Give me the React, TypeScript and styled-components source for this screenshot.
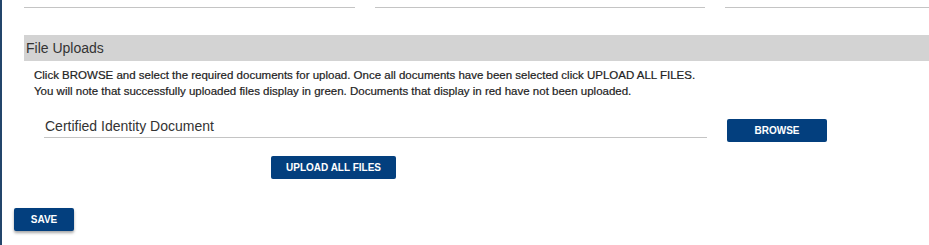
import React from "react";
import styled, { createGlobalStyle } from "styled-components";

const GlobalStyle = createGlobalStyle`
  html, body {
    margin: 0;
    padding: 0;
    background: #ffffff;
  }
  body {
    font-family: "Liberation Sans", Arial, sans-serif;
    color: #333333;
  }
`;

const Page = styled.div`
  min-height: 245px;
  border-left: 2px solid #23456b;
  box-sizing: border-box;
  overflow: hidden;
`;

const TopFields = styled.div`
  display: grid;
  grid-template-columns: 331px 330px 1fr;
  column-gap: 20px;
  margin-left: 22px;
  height: 8px;
`;

const Field = styled.div`
  border-bottom: 1px solid #c4c4c4;
  height: 7px;
`;

const SectionHeader = styled.div`
  margin: 27px 0 0 22px;
  height: 26px;
  background: #d3d3d3;
  display: flex;
  align-items: center;
  padding-left: 2px;
  font-size: 14px;
  color: #333333;
`;

const Instructions = styled.p`
  margin: 6px 0 0 32px;
  font-size: 11.5px;
  line-height: 16px;
  color: #222222;
  -webkit-text-stroke: 0.2px #222222;
`;

const UploadRow = styled.div`
  display: flex;
  align-items: flex-start;
  gap: 20px;
  margin: 18px 0 0 42px;
`;

const DocField = styled.div`
  width: 662px;
  height: 20px;
  border-bottom: 1px solid #c4c4c4;
  font-size: 14px;
  line-height: 18px;
  padding-left: 1px;
  color: #333333;
`;

const Button = styled.button<{ $width: number }>`
  width: ${({ $width }) => $width}px;
  height: 23px;
  background: #033f7e;
  color: #ffffff;
  border: none;
  border-radius: 2px;
  font-family: "Liberation Sans", Arial, sans-serif;
  font-size: 10px;
  font-weight: bold;
  padding: 0;
  cursor: pointer;
`;

const BrowseButton = styled(Button)`
  margin-top: 2px;
`;

const UploadAllRow = styled.div`
  display: flex;
  margin: 14px 0 0 269px;
`;

const SaveRow = styled.div`
  display: flex;
  margin: 29px 0 0 12px;
`;

const SaveButton = styled(Button)`
  box-shadow: 0 2px 3px rgba(0, 0, 0, 0.35);
`;

export default function App() {
  return (
    <>
      <GlobalStyle />
      <Page>
        <TopFields>
          <Field />
          <Field />
          <Field />
        </TopFields>
        <SectionHeader>File Uploads</SectionHeader>
        <Instructions>
          Click BROWSE and select the required documents for upload. Once all documents have been selected click UPLOAD ALL FILES.
          <br />
          You will note that successfully uploaded files display in green. Documents that display in red have not been uploaded.
        </Instructions>
        <UploadRow>
          <DocField>Certified Identity Document</DocField>
          <BrowseButton $width={100}>BROWSE</BrowseButton>
        </UploadRow>
        <UploadAllRow>
          <Button $width={125}>UPLOAD ALL FILES</Button>
        </UploadAllRow>
        <SaveRow>
          <SaveButton $width={60}>SAVE</SaveButton>
        </SaveRow>
      </Page>
    </>
  );
}
